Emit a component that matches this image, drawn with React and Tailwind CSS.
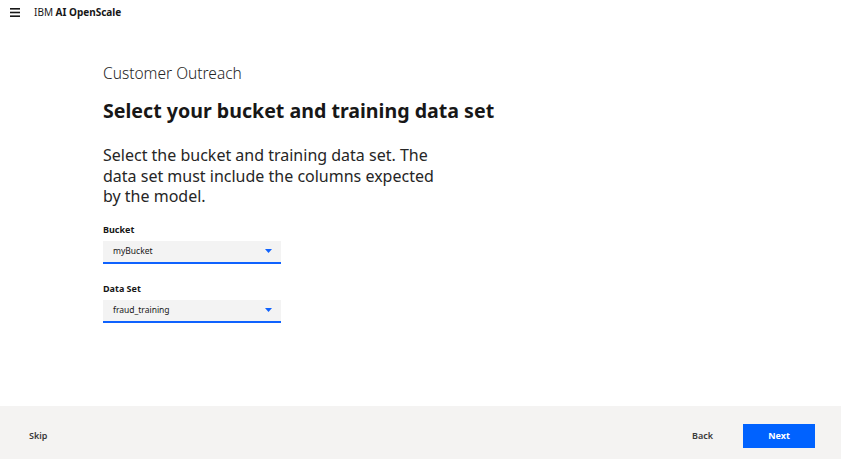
import { useState } from 'react';

const font = { fontFamily: '"Noto Sans", "Open Sans", Arial, sans-serif' };

function Dropdown({ label, value }) {
  return (
    <div className="mb-[20px]">
      <div className="text-[9px] font-bold text-[#171717] leading-none mb-[7px]">{label}</div>
      <div className="w-[178px] h-[23px] bg-[#f3f3f3] border-b-2 border-[#0f62fe] flex items-center justify-between pl-[10px] pr-[9px]">
        <span className="text-[8.5px] text-[#171717]">{value}</span>
        <svg width="7" height="4" viewBox="0 0 7 4">
          <path d="M0 0 L7 0 L3.5 4 Z" fill="#0f62fe" />
        </svg>
      </div>
    </div>
  );
}

export default function App() {
  const [bucket] = useState('myBucket');
  const [dataSet] = useState('fraud_training');

  return (
    <div style={font} className="w-[841px] h-[459px] bg-white flex flex-col text-[#171717]">
      <header className="h-[25px] flex items-center pl-[10px]">
        <svg width="10" height="9" viewBox="0 0 10 9">
          <rect x="0" y="0" width="10" height="1.6" fill="#171717" />
          <rect x="0" y="3.7" width="10" height="1.6" fill="#171717" />
          <rect x="0" y="7.4" width="10" height="1.6" fill="#171717" />
        </svg>
        <span className="ml-[14px] text-[10px]">
          IBM <span className="font-bold">AI OpenScale</span>
        </span>
      </header>

      <main className="flex-1 pl-[103px] pt-[41px]">
        <div className="text-[15.5px] font-light leading-none text-[#262626]">Customer Outreach</div>
        <h1 className="mt-[19px] text-[19.6px] font-bold leading-none">Select your bucket and training data set</h1>
        <p className="mt-[25px] w-[340px] text-[16px] leading-[20.5px] text-[#262626]">
          Select the bucket and training data set. The data set must include the columns expected by the model.
        </p>
        <div className="mt-[18px]">
          <Dropdown label="Bucket" value={bucket} />
          <Dropdown label="Data Set" value={dataSet} />
        </div>
      </main>

      <footer className="h-[53px] bg-[#f4f3f2] flex items-center pl-[29px] pr-[26px] pt-[6px]">
        <span className="text-[9px] font-semibold text-[#393939]">Skip</span>
        <div className="ml-auto flex items-center">
          <span className="text-[9px] font-semibold text-[#393939] mr-[30px]">Back</span>
          <button className="w-[72px] h-[24px] bg-[#0062ff] text-white text-[9px] font-bold">Next</button>
        </div>
      </footer>
    </div>
  );
}
